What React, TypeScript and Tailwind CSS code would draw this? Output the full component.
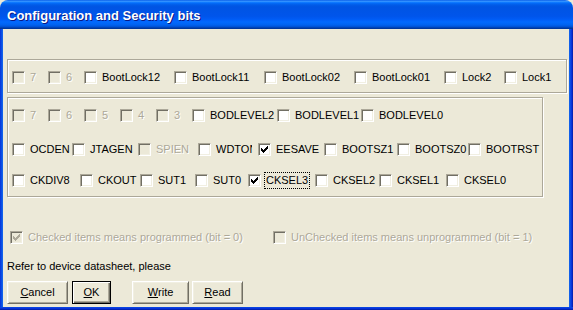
import clsx from "clsx";

type Bit = {
  label: string;
  w?: string;
  disabled?: boolean;
  checked?: boolean;
  focus?: boolean;
  clip?: string;
};

const lockBits: Bit[] = [
  { label: "7", w: "w-[36px]", disabled: true },
  { label: "6", w: "w-[36px]", disabled: true },
  { label: "BootLock12", w: "w-[90px]" },
  { label: "BootLock11", w: "w-[90px]" },
  { label: "BootLock02", w: "w-[90px]" },
  { label: "BootLock01", w: "w-[90px]" },
  { label: "Lock2", w: "w-[60px]" },
  { label: "Lock1" },
];

const extBits: Bit[] = [
  { label: "7", w: "w-[36px]", disabled: true },
  { label: "6", w: "w-[36px]", disabled: true },
  { label: "5", w: "w-[36px]", disabled: true },
  { label: "4", w: "w-[36px]", disabled: true },
  { label: "3", w: "w-[36px]", disabled: true },
  { label: "BODLEVEL2", w: "w-[85px]" },
  { label: "BODLEVEL1", w: "w-[84px]" },
  { label: "BODLEVEL0" },
];

const highBits: Bit[] = [
  { label: "OCDEN", w: "w-[60px]" },
  { label: "JTAGEN", w: "w-[66px]" },
  { label: "SPIEN", w: "w-[60px]", disabled: true },
  { label: "WDTON", w: "w-[60px]", clip: "max-w-[39px]" },
  { label: "EESAVE", w: "w-[66px]", checked: true },
  { label: "BOOTSZ1", w: "w-[73px]" },
  { label: "BOOTSZ0", w: "w-[71px]" },
  { label: "BOOTRST" },
];

const lowBits: Bit[] = [
  { label: "CKDIV8", w: "w-[68px]" },
  { label: "CKOUT", w: "w-[60px]" },
  { label: "SUT1", w: "w-[55px]" },
  { label: "SUT0", w: "w-[53px]" },
  { label: "CKSEL3", w: "w-[67px]", checked: true, focus: true },
  { label: "CKSEL2", w: "w-[64px]" },
  { label: "CKSEL1", w: "w-[67px]" },
  { label: "CKSEL0" },
];

const dim = "text-[#aca899] [text-shadow:1px_1px_#ffffff]";

const Box = ({ checked, disabled }: { checked?: boolean; disabled?: boolean }) => (
  <span
    className={clsx(
      "relative block w-[13px] h-[13px] shrink-0 border border-t-[#aca899] border-l-[#aca899] border-b-white border-r-white shadow-[inset_1px_1px_#716f64,inset_-1px_-1px_#f1efe2]",
      disabled ? "bg-[#ece9d8]" : "bg-white"
    )}
  >
    {checked && (
      <svg
        className="absolute left-[2px] top-[2px]"
        width="7"
        height="7"
        viewBox="0 0 7 7"
        shapeRendering="crispEdges"
      >
        <path
          d="M0 2h1v3h-1z M1 3h1v3h-1z M2 4h1v3h-1z M3 3h1v3h-1z M4 2h1v3h-1z M5 1h1v3h-1z M6 0h1v3h-1z"
          fill={disabled ? "#aca899" : "#000"}
        />
      </svg>
    )}
  </span>
);

const Check = ({ bit }: { bit: Bit }) => (
  <div className={clsx("flex items-center shrink-0", bit.w)}>
    <Box checked={bit.checked} disabled={bit.disabled} />
    <span
      className={clsx(
        "ml-[3px] px-[1px] border leading-[15px] whitespace-nowrap",
        bit.focus ? "border-dotted border-black" : "border-transparent",
        bit.disabled ? dim : "text-black",
        bit.clip && "overflow-hidden",
        bit.clip
      )}
    >
      {bit.label}
    </span>
  </div>
);

const Row = ({ bits }: { bits: Bit[] }) => (
  <div className="flex items-center h-[13px]">
    {bits.map((b, i) => (
      <Check key={i} bit={b} />
    ))}
  </div>
);

const Button = ({ children, w, def }: { children: React.ReactNode; w: string; def?: boolean }) => (
  <button
    className={clsx(
      "h-[23px] flex items-center justify-center bg-[#ece9d8] text-black leading-none",
      w,
      def
        ? "border border-black shadow-[inset_1px_1px_#ffffff,inset_-1px_-1px_#716f64,inset_-2px_-2px_#aca899]"
        : "border border-t-white border-l-white border-b-[#716f64] border-r-[#716f64] shadow-[inset_1px_1px_#f1efe2,inset_-1px_-1px_#aca899]"
    )}
  >
    {children}
  </button>
);

export default function App() {
  return (
    <div className="w-[573px] h-[310px] bg-[#ece9d8] font-['Liberation_Sans',Arial,sans-serif] text-[11px] select-none">
      <div className="flex flex-col h-full rounded-t-[8px] overflow-hidden">
        <div className="h-[29px] shrink-0 pl-[7px] pt-[8px] bg-[linear-gradient(to_bottom,#0058e6_0%,#3a93ff_4%,#288eff_6%,#127dff_8%,#036ffc_10%,#0262ee_14%,#0057e5_20%,#0054e3_24%,#0055eb_56%,#005bf5_66%,#026afe_76%,#0062ef_86%,#0052d6_92%,#0040ab_96%,#003092_100%)]">
          <span className="text-white font-bold text-[13px] leading-[16px] [text-shadow:1px_1px_#0a1883]">
            Configuration and Security bits
          </span>
        </div>

        <div className="flex flex-1">
          <div className="w-[3px] bg-[linear-gradient(to_right,#0831d9,#0a4ee4,#166aee)]" />

          <div className="w-[566px] flex flex-col bg-[#ece9d8]">
            <div className="mt-[30px] ml-[4px] w-[560px] h-[34px] pl-[4px] pt-[11px] border border-[#aca899] shadow-[inset_1px_1px_#ffffff,1px_1px_#ffffff]">
              <Row bits={lockBits} />
            </div>

            <div className="mt-[4px] ml-[4px] w-[536px] h-[100px] pl-[4px] pt-[11px] flex flex-col border border-[#aca899] shadow-[inset_1px_1px_#ffffff,1px_1px_#ffffff]">
              <Row bits={extBits} />
              <div className="mt-[21px]">
                <Row bits={highBits} />
              </div>
              <div className="mt-[18px]">
                <Row bits={lowBits} />
              </div>
            </div>

            <div className="mt-[34px] ml-[7px]">
              <Row
                bits={[
                  {
                    label: "Checked items means programmed (bit = 0)",
                    w: "w-[263px]",
                    disabled: true,
                    checked: true,
                  },
                  { label: "UnChecked items means unprogrammed (bit = 1)", disabled: true },
                ]}
              />
            </div>

            <div className="mt-[16px] ml-[4px] leading-[13px] text-black">
              Refer to device datasheet, please
            </div>

            <div className="mt-[8px] ml-[4px] flex">
              <Button w="w-[61px]">
                <span className="underline">C</span>ancel
              </Button>
              <div className="ml-[4px]">
                <Button w="w-[39px]" def>
                  <span className="underline">O</span>K
                </Button>
              </div>
              <div className="ml-[21px]">
                <Button w="w-[57px]">
                  <span className="underline">W</span>rite
                </Button>
              </div>
              <div className="ml-[3px]">
                <Button w="w-[51px]">
                  <span className="underline">R</span>ead
                </Button>
              </div>
            </div>
          </div>

          <div className="w-[4px] bg-[linear-gradient(to_right,#166aee,#0a4ee4,#0831d9,#001ea0)]" />
        </div>

        <div className="h-[3px] shrink-0 bg-[linear-gradient(to_bottom,#0a4ee4,#0831d9,#001ea0)]" />
      </div>
    </div>
  );
}
